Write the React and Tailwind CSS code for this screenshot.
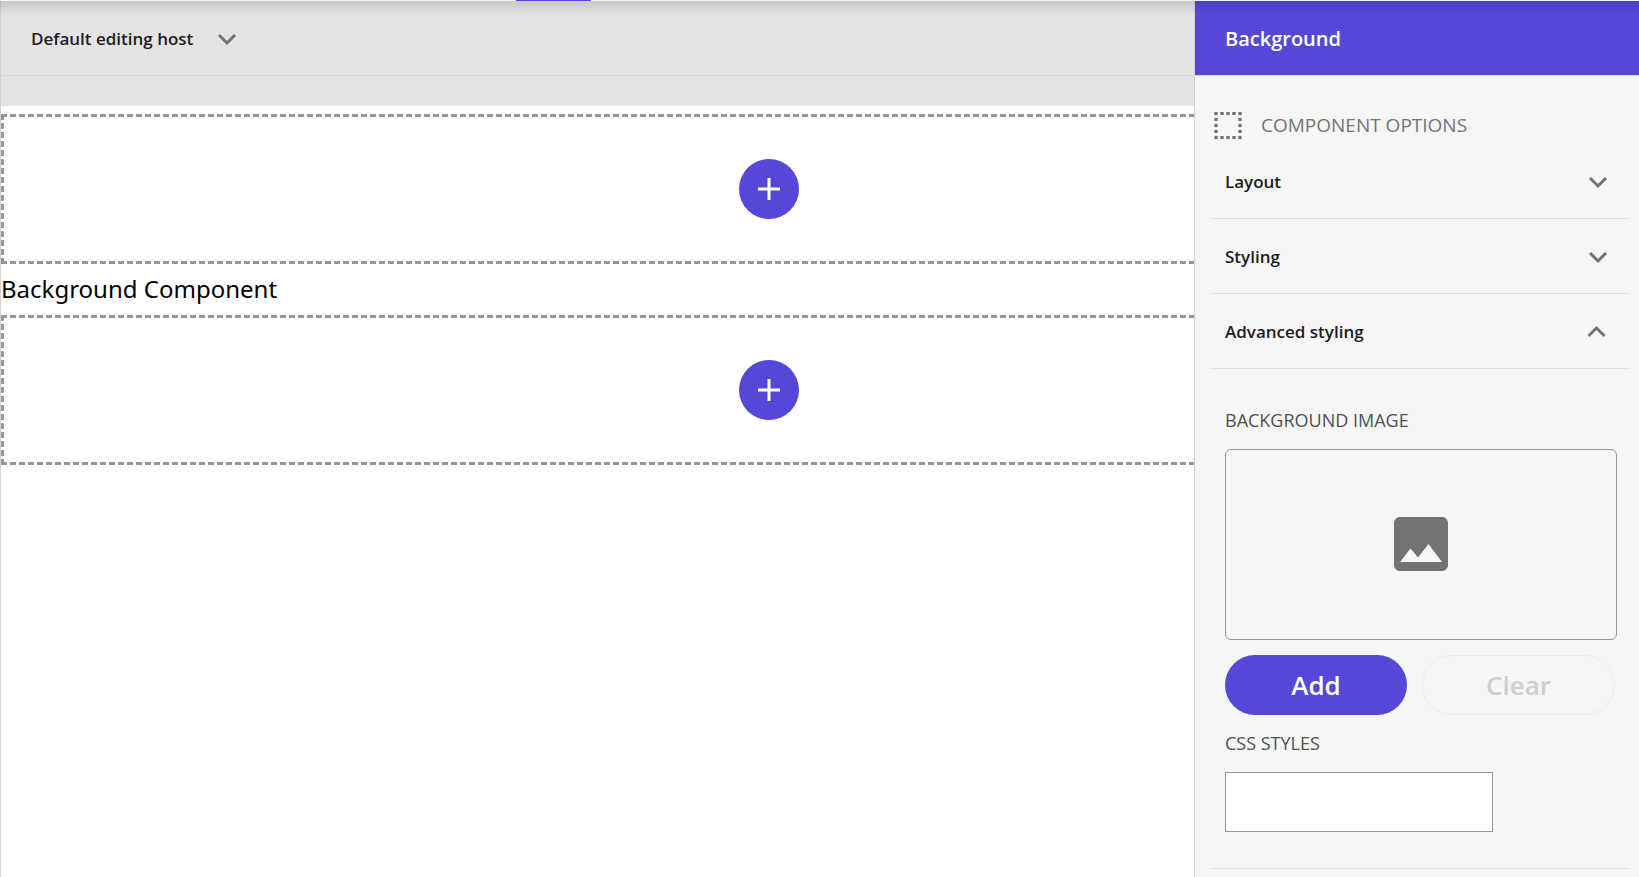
import { useState } from 'react';
import { MdImage } from 'react-icons/md';

var SECTIONS = ['Layout', 'Styling', 'Advanced styling'];

function Chevron({ up }) {
  return (
    <svg width="24" height="24" viewBox="0 0 24 24" fill="none" stroke="#737373" strokeWidth="3" aria-hidden="true" className="shrink-0">
      {up ? <path d="M2.5 16 10.5 8 18.5 16" /> : <path d="M4 8 12 16 20 8" />}
    </svg>
  );
}

function DottedSquare() {
  var cells = [];
  for (var i = 0; i < 5; i++) {
    cells.push([i * 6, 0], [i * 6, 24]);
    if (i > 0 && i < 4) cells.push([0, i * 6], [24, i * 6]);
  }
  return (
    <svg width="28" height="27" viewBox="0 0 28 27" fill="#737373" aria-hidden="true">
      {cells.map(function(c) {
        return <rect key={c.join('-')} x={c[0] + 0.3} y={c[1]} width="3.4" height="3" />;
      })}
    </svg>
  );
}

function DropZone() {
  return (
    <div className="flex h-[150px] items-center justify-center border-3 border-dashed border-[#969696]">
      <button type="button" aria-label="Add component" className="flex size-[60px] items-center justify-center rounded-full bg-[#5548d9]">
        <svg width="22" height="22" viewBox="0 0 22 22" fill="#fff" aria-hidden="true">
          <path d="M9.5 0h3v9.5H22v3h-9.5V22h-3v-9.5H0v-3h9.5z" />
        </svg>
      </button>
    </div>
  );
}

function AdvancedStyling() {
  return (
    <div className="border-b border-[#e1e1e1] pt-[37px] pr-[13px] pb-9 pl-[15px]">
      <h3 className="text-lg leading-7 text-[#505050]">BACKGROUND IMAGE</h3>
      <div className="mt-[15px] flex h-[191px] items-center justify-center rounded-md border border-[#969696] pb-[2px]">
        <MdImage size={72} color="#737373" />
      </div>
      <div className="mt-[15px] flex gap-[15px] text-[26px] font-semibold">
        <button type="button" className="h-[60px] w-[182px] rounded-full bg-[#5548d9] text-white">Add</button>
        <button type="button" disabled className="h-[60px] w-[193px] rounded-full border border-[#e6eeec] text-[#cfcfcf]">Clear</button>
      </div>
      <label htmlFor="css-styles" className="mt-[14px] block text-lg leading-7 text-[#505050]">CSS STYLES</label>
      <input id="css-styles" type="text" className="mt-[15px] block h-[60px] w-[268px] border border-[#969696] bg-white px-3 text-lg" />
    </div>
  );
}

export default function App() {
  var [open, setOpen] = useState('Advanced styling');

  return (
    <div className="relative flex h-screen flex-col overflow-hidden bg-white font-['Open_Sans',sans-serif] text-[#1e1b20]">
      <div className="h-px shrink-0 bg-[#f5f5f5]">
        <div className="ml-[516px] h-px w-[75px] bg-[#5548d9]" />
      </div>
      <div className="pointer-events-none absolute inset-x-0 top-px z-10 h-4 bg-linear-to-b from-black/12 to-transparent" />

      <div className="flex min-h-0 flex-1">
        <main className="min-w-0 flex-1 overflow-hidden border-l border-[#d2d2d2]">
          <div className="flex h-[75px] items-center border-b border-[#d9d9d9] bg-[#e4e4e4] pt-0.5 pl-[30px]">
            <button type="button" className="flex items-center gap-[22px] text-[17px] font-semibold">
              Default editing host
              <Chevron />
            </button>
          </div>
          <div className="h-[30px] bg-[#e4e4e4]" />
          <div className="min-w-[1536px] pt-2">
            <DropZone />
            <p className="pt-[7px] pb-2 font-['Noto_Sans',sans-serif] text-2xl leading-9 text-black">Background Component</p>
            <DropZone />
          </div>
        </main>

        <aside className="w-[445px] shrink-0 overflow-hidden border-l border-[#d2d2d2] bg-[#f6f6f6]">
          <h1 className="flex h-[75px] items-center border-b border-[#d9d9e8] bg-[#5548d9] pt-0.5 pl-[30px] text-xl font-semibold text-white">
            Background
          </h1>
          <div className="pr-[9px] pl-[15px]">
            <div className="flex items-center gap-[19px] pt-[34px] pb-1 pl-1 text-[#737373]">
              <DottedSquare />
              <h2 className="text-[19px] leading-[30px] font-medium">COMPONENT OPTIONS</h2>
            </div>
            {SECTIONS.map(function(name) {
              var isOpen = open === name;
              return (
                <button
                  key={name}
                  type="button"
                  aria-expanded={isOpen}
                  onClick={function() { setOpen(isOpen ? null : name); }}
                  className="flex h-[75px] w-full items-center justify-between border-b border-[#e1e1e1] pt-0.5 pr-5 pl-[15px] text-[17px] font-semibold"
                >
                  {name}
                  <Chevron up={isOpen} />
                </button>
              );
            })}
            {open === 'Advanced styling' && <AdvancedStyling />}
          </div>
        </aside>
      </div>
    </div>
  );
}
